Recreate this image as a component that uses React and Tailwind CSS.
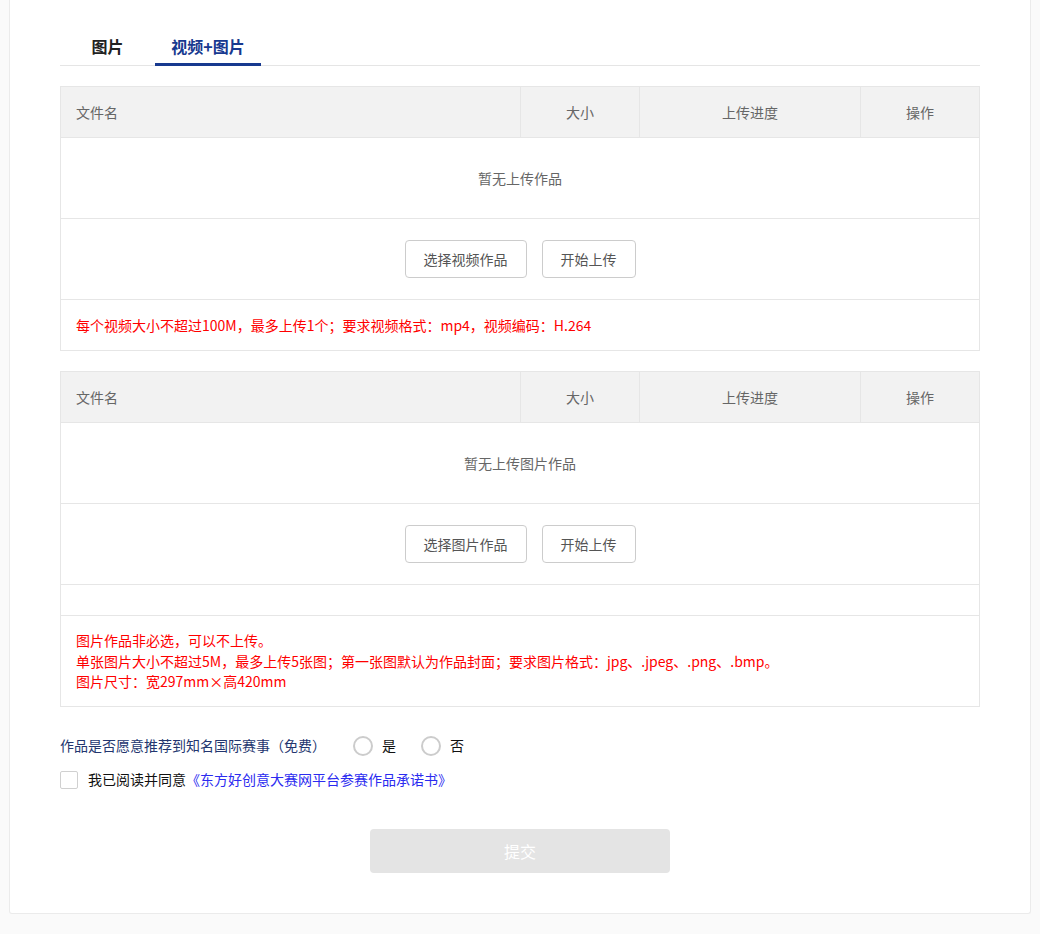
import { useState } from "react";

const font = { fontFamily: '"Microsoft YaHei", "Noto Sans CJK SC", "Noto Sans", sans-serif' };

function UploadTable({ emptyText, pickLabel, spacer, tips }) {
  return (
    <div className="border border-[#e6e6e6] text-[14px]">
      {/* header */}
      <div className="grid grid-cols-[459px_119px_221px_1fr] h-[51px] bg-[#f2f2f2] border-b border-[#e6e6e6] text-[#666]">
        <div className="flex items-center pl-[15px]">文件名</div>
        <div className="flex items-center justify-center border-l border-[#e6e6e6]">大小</div>
        <div className="flex items-center justify-center border-l border-[#e6e6e6]">上传进度</div>
        <div className="flex items-center justify-center border-l border-[#e6e6e6]">操作</div>
      </div>

      {/* empty */}
      <div className="h-[81px] flex items-center justify-center border-b border-[#e6e6e6] text-[#666]">
        {emptyText}
      </div>

      {/* actions */}
      <div className="h-[81px] flex items-center justify-center gap-[15px] border-b border-[#e6e6e6]">
        <button className="h-[38px] px-[18px] border border-[#ccc] rounded-[4px] bg-white text-[#555]">{pickLabel}</button>
        <button className="h-[38px] px-[18px] border border-[#ccc] rounded-[4px] bg-white text-[#555]">开始上传</button>
      </div>

      {spacer && <div className="h-[31px] border-b border-[#e6e6e6]" />}

      {/* tips */}
      <div className={`px-[15px] text-[#ff0000] leading-[20.5px] ${tips.length > 1 ? "py-[14px]" : "h-[50px] flex items-center"}`}>
        <div>
          {tips.map((t) => (
            <div key={t}>{t}</div>
          ))}
        </div>
      </div>
    </div>
  );
}

export default function App() {
  const [tab, setTab] = useState(1);
  const [recommend, setRecommend] = useState(null);
  const [agree, setAgree] = useState(false);

  return (
    <div className="min-h-[934px] bg-[#fafafa] pb-[21px]" style={font}>
      <div className="mx-[9px] bg-white border border-t-0 border-[#ebebeb] rounded-b-[3px] px-[50px] pt-[28px] pb-[40px]">
        {/* tabs */}
        <div className="flex border-b border-[#e5e5e5]">
          {["图片", "视频+图片"].map((t, i) => (
            <div
              key={t}
              onClick={() => setTab(i)}
              className={`h-[38px] -mb-px flex items-center justify-center text-[16px] font-bold cursor-pointer border-b-[3px] ${
                i === 0 ? "w-[95px]" : "w-[106px]"
              } ${tab === i ? "border-[#17398f] text-[#17398f]" : "border-transparent text-[#222]"}`}
            >
              {t}
            </div>
          ))}
        </div>

        <div className="mt-[20px]">
          <UploadTable
            emptyText="暂无上传作品"
            pickLabel="选择视频作品"
            tips={["每个视频大小不超过100M，最多上传1个；要求视频格式：mp4，视频编码：H.264"]}
          />
        </div>

        <div className="mt-[20px]">
          <UploadTable
            emptyText="暂无上传图片作品"
            pickLabel="选择图片作品"
            spacer
            tips={[
              "图片作品非必选，可以不上传。",
              "单张图片大小不超过5M，最多上传5张图；第一张图默认为作品封面；要求图片格式：jpg、.jpeg、.png、.bmp。",
              "图片尺寸：宽297mm×高420mm",
            ]}
          />
        </div>

        {/* recommend */}
        <div className="mt-[29px] flex items-center h-[20px] text-[14px]">
          <span className="text-[#23366f]">作品是否愿意推荐到知名国际赛事（免费）</span>
          <label className="ml-[27px] flex items-center cursor-pointer" onClick={() => setRecommend("yes")}>
            <span className={`w-[20px] h-[20px] rounded-full border-2 ${recommend === "yes" ? "border-[#17398f]" : "border-[#ccc]"}`} />
            <span className="ml-[9px] text-[#111]">是</span>
          </label>
          <label className="ml-[25px] flex items-center cursor-pointer" onClick={() => setRecommend("no")}>
            <span className={`w-[20px] h-[20px] rounded-full border-2 ${recommend === "no" ? "border-[#17398f]" : "border-[#ccc]"}`} />
            <span className="ml-[9px] text-[#111]">否</span>
          </label>
        </div>

        {/* agree */}
        <div className="mt-[15px] flex items-center h-[18px] text-[14px]">
          <span
            onClick={() => setAgree(!agree)}
            className={`w-[18px] h-[18px] border rounded-[2px] cursor-pointer ${agree ? "border-[#17398f] bg-[#17398f]" : "border-[#d0d0d0] bg-white"}`}
          />
          <span className="ml-[10px] text-[#111]">我已阅读并同意</span>
          <span className="text-[#2b2bf0] cursor-pointer">《东方好创意大赛网平台参赛作品承诺书》</span>
        </div>

        {/* submit */}
        <div className="mt-[40px] flex justify-center">
          <button className="w-[300px] h-[44px] rounded-[4px] bg-[#e4e4e4] text-white text-[16px]">提交</button>
        </div>
      </div>
    </div>
  );
}
